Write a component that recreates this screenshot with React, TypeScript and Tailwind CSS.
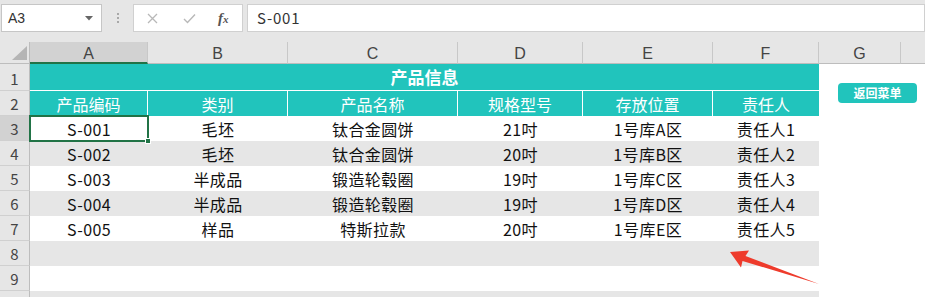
import React from "react";

const colW = ["w-[118px]", "w-[140px]", "w-[170px]", "w-[125px]", "w-[130px]", "w-[106px]"];
const letters = ["A", "B", "C", "D", "E", "F"];
const heads = ["产品编码", "类别", "产品名称", "规格型号", "存放位置", "责任人"];
const data = [
  ["S-001", "毛坯", "钛合金圆饼", "21吋", "1号库A区", "责任人1"],
  ["S-002", "毛坯", "钛合金圆饼", "20吋", "1号库B区", "责任人2"],
  ["S-003", "半成品", "锻造轮毂圈", "19吋", "1号库C区", "责任人3"],
  ["S-004", "半成品", "锻造轮毂圈", "19吋", "1号库D区", "责任人4"],
  ["S-005", "样品", "特斯拉款", "20吋", "1号库E区", "责任人5"],
  ["", "", "", "", "", ""],
  ["", "", "", "", "", ""],
  ["", "", "", "", "", ""],
];

function RowHead({ n, h, selected }: { n: number | null; h: string; selected?: boolean }) {
  return (
    <div
      className={`w-[30px] ${h} shrink-0 flex items-end justify-center pb-[1px] border-r border-b border-r-[#bdbdbd] border-b-[#d0d0d0] text-[15px] leading-[20px] text-[#444] ${
        selected ? "bg-[#d2d2d2]" : "bg-[#e6e6e6]"
      }`}
    >
      {n}
    </div>
  );
}

export default function App() {
  return (
    <div className="w-[925px] h-[297px] overflow-hidden bg-white relative font-['Noto_Sans_CJK_SC','Liberation_Sans',sans-serif] select-none">
      {/* Formula bar */}
      <div className="h-[42px] bg-[#e6e6e6] flex items-start pt-[4px] pl-[1px]">
        <div className="w-[101px] h-[28px] bg-white border border-[#c6c6c6] flex items-center justify-between pl-[6px] pr-[8px]">
          <span className="text-[14px] text-[#333] font-['Liberation_Sans',sans-serif]">A3</span>
          <svg width="8" height="5" viewBox="0 0 8 5">
            <path d="M0 0 L8 0 L4 4.5 Z" fill="#666" />
          </svg>
        </div>
        <div className="w-[31px] h-[28px] flex items-center justify-center">
          <div className="flex flex-col gap-[2px]">
            <span className="w-[2px] h-[2px] bg-[#a8a8a8]" />
            <span className="w-[2px] h-[2px] bg-[#a8a8a8]" />
            <span className="w-[2px] h-[2px] bg-[#a8a8a8]" />
          </div>
        </div>
        <div className="w-[110px] h-[28px] bg-white border border-[#d0d0d0] flex items-center">
          <svg className="ml-[13px]" width="11" height="11" viewBox="0 0 11 11">
            <path d="M1 1 L10 10 M10 1 L1 10" stroke="#b8b8b8" strokeWidth="1.3" />
          </svg>
          <svg className="ml-[25px]" width="13" height="11" viewBox="0 0 13 11">
            <path d="M1 6 L4.5 9.5 L12 1.5" stroke="#b8b8b8" strokeWidth="1.4" fill="none" />
          </svg>
          <span className="ml-[22px] text-[15px] italic font-bold text-[#555] font-['Liberation_Serif',serif] leading-none">
            f<span className="text-[11px]">x</span>
          </span>
        </div>
        <div className="ml-[4px] flex-1 h-[28px] bg-white border border-[#d0d0d0] flex items-center pl-[9px]">
          <span className="text-[15px] text-[#333] tracking-[0.8px]">S-001</span>
        </div>
      </div>

      {/* Column headers */}
      <div className="flex h-[22px]">
        <div className="w-[30px] shrink-0 bg-[#e6e6e6] border-r border-b border-[#bdbdbd] relative">
          <svg className="absolute right-[2px] bottom-[3px]" width="15" height="14" viewBox="0 0 15 14">
            <path d="M15 0 L15 14 L0 14 Z" fill="#b5b5b5" />
          </svg>
        </div>
        {letters.map((l, i) => (
          <div
            key={l}
            className={`${colW[i]} shrink-0 flex items-center justify-center pt-[3px] text-[16px] text-[#444] font-['Liberation_Sans',sans-serif] font-light border-r border-r-[#c8c8c8] ${
              i === 0 ? "bg-[#d2d2d2] border-b-2 border-b-[#217346]" : "bg-[#e6e6e6] border-b border-b-[#bdbdbd]"
            }`}
          >
            {l}
          </div>
        ))}
        <div className="w-[82px] shrink-0 flex items-center justify-center pt-[3px] text-[16px] text-[#444] font-['Liberation_Sans',sans-serif] font-light bg-[#e6e6e6] border-r border-r-[#c8c8c8] border-b border-b-[#bdbdbd]">
          G
        </div>
        <div className="flex-1 bg-[#e6e6e6] border-b border-b-[#bdbdbd]" />
      </div>

      {/* Row 1 */}
      <div className="flex h-[27px]">
        <RowHead n={1} h="h-[27px]" />
        <div className="w-[789px] shrink-0 bg-[#21c4bc] border-b border-white flex items-center justify-center text-white font-bold text-[17px]">
          产品信息
        </div>
        <div className="flex-1 bg-white" />
      </div>

      {/* Row 2 */}
      <div className="flex h-[25px]">
        <RowHead n={2} h="h-[25px]" />
        {heads.map((t, i) => (
          <div
            key={t}
            className={`${colW[i]} shrink-0 bg-[#21c4bc] flex items-center justify-center text-white text-[16px] ${
              i < 5 ? "border-r border-white" : ""
            }`}
          >
            {t}
          </div>
        ))}
        <div className="flex-1 bg-white" />
      </div>

      {/* Data rows */}
      {data.map((row, r) => (
        <div key={r} className="flex h-[25px]">
          <RowHead n={r < 7 ? r + 3 : null} h="h-[25px]" selected={r === 0} />
          <div className={`w-[789px] shrink-0 flex ${r % 2 === 1 ? "bg-[#e6e6e6]" : "bg-white"}`}>
            {row.map((c, i) => (
              <div
                key={i}
                className={`${colW[i]} shrink-0 flex items-center justify-center text-[16px] text-[#111] tracking-[0.4px] relative`}
              >
                {c}
                {r === 0 && i === 0 && (
                  <div className="absolute left-[-1px] top-[-1px] w-[120px] h-[27px] border-2 border-[#217346]">
                    <div className="absolute right-[-4px] bottom-[-4px] w-[6px] h-[6px] bg-[#217346] border border-white" />
                  </div>
                )}
              </div>
            ))}
          </div>
          <div className="flex-1 bg-white" />
        </div>
      ))}

      {/* Floating button */}
      <div className="absolute left-[838px] top-[83px] w-[79px] h-[20px] rounded-[4px] bg-[#21c4bc] flex items-center justify-center text-white font-bold text-[12px]">
        返回菜单
      </div>

      {/* Red arrow */}
      <svg className="absolute left-0 top-0 pointer-events-none" width="925" height="297" viewBox="0 0 925 297">
        <path d="M730 252 L749 250.5 L745.5 256 L819 284 L742.5 261 L741 267.5 Z" fill="#ee3b2c" />
      </svg>
    </div>
  );
}
